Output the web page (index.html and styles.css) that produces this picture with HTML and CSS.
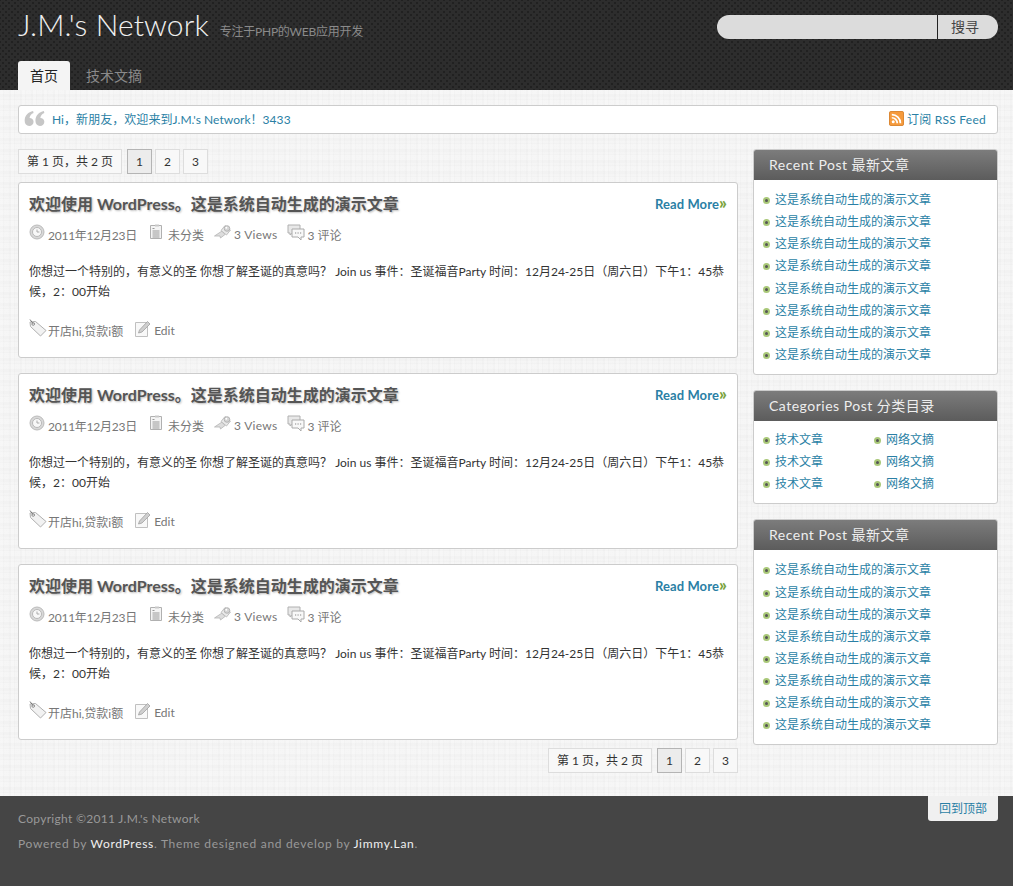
FILE: index.html
```html
<!DOCTYPE html>
<html lang="zh-CN">
<head>
    <meta charset="UTF-8">
    <title>J.M.'s Network</title>
    <link rel="stylesheet" href="styles.css">
</head>
<body>
    <svg class="defs" width="0" height="0">
        <symbol id="i-clock" viewBox="0 0 16 16">
            <circle cx="8" cy="8" r="7" fill="#d8d8d8" stroke="#bbb"/>
            <circle cx="8" cy="8" r="4.500" fill="#f8f8f8" stroke="#b8b8b8"/>
            <path d="M8 5.500V8h2.400" fill="none" stroke="#aaa"/>
        </symbol>
        <symbol id="i-doc" viewBox="0 0 14 16">
            <path d="M1.500 1.500h11v13h-11z" fill="#f4f4f4" stroke="#b0b0b0"/>
            <path d="M3.500 4.500h2M3.500 7h7M3.500 9h7M3.500 11h7M3.500 13h7" stroke="#999"/>
            <path d="M6 .5h4v2H6z" fill="#c8c8c8"/>
        </symbol>
        <symbol id="i-pin" viewBox="0 0 18 16">
            <path d="M.5 12 8 7l3 3.500-4.500 3.500L6 12z" fill="#ddd" stroke="#b4b4b4" stroke-width=".8"/>
            <path d="M7 6.500 11 1.500l5.500 4.500-4 5z" fill="#e8e8e8" stroke="#b4b4b4" stroke-width=".8"/>
            <circle cx="13" cy="4.500" r="2.800" fill="#d4d4d4" stroke="#aaa" stroke-width=".8"/>
            <circle cx="12.300" cy="3.800" r="1" fill="#fff"/>
        </symbol>
        <symbol id="i-chat" viewBox="0 0 18 17">
            <path d="M1 1h12v8H5.500L3 11V9H1z" fill="#e8e8e8" stroke="#b0b0b0"/>
            <path d="M5 5h12v8h-3v3l-3-3H5z" fill="#f8f8f8" stroke="#aaa"/>
            <path d="M8 9h1.200M10.500 9h1.200M13 9h1.200" stroke="#888"/>
        </symbol>
        <symbol id="i-tag" viewBox="0 0 18 18">
            <path d="M1 3 6.500 2.500 17 11.500 11.500 17 1.500 7.500z" fill="#f2f2f2" stroke="#b0b0b0"/>
            <circle cx="4.200" cy="5" r="1.300" fill="#fff" stroke="#888"/>
            <path d="M1 .5l3 4" stroke="#777"/>
        </symbol>
        <symbol id="i-edit" viewBox="0 0 16 17">
            <path d="M.5 2.500h12v14H.5z" fill="#f8f8f8" stroke="#c0c0c0"/>
            <path d="M3.500 13 4.500 10 12.500 1.500 15 4 7 12z" fill="#cfcfcf" stroke="#a0a0a0" stroke-width=".8"/>
        </symbol>
    </svg>

    <div class="header">
        <div class="top-row">
            <div class="brand">
                <a class="site-title" href="#">J.M.'s Network</a>
                <span class="site-desc">专注于PHP的WEB应用开发</span>
            </div>
            <form class="search">
                <input class="search-input" type="text" aria-label="搜寻">
                <button class="search-btn" type="button">搜寻</button>
            </form>
        </div>
        <ul class="nav">
            <li class="current"><a href="#">首页</a></li>
            <li><a href="#">技术文摘</a></li>
        </ul>
    </div>

    <div class="wrap">
        <div class="notice">
            <svg class="quote" viewBox="0 0 21 16">
                <path d="M9 0C4 1 0 4.500 0 10.500 0 14 2 16 4.800 16 7.500 16 9.500 14 9.500 11.500 9.500 9 7.500 7.500 5.200 7.500 5.500 5 7 3 9.500 2zM20.500 0C15.500 1 11.500 4.500 11.500 10.500 11.500 14 13.500 16 16.300 16 19 16 21 14 21 11.500 21 9 19 7.500 16.700 7.500 17 5 18.500 3 21 2z" fill="#c6c6c6"/>
            </svg>
            <span class="notice-text">Hi，新朋友，欢迎来到J.M.'s Network！3433</span>
            <a class="rss" href="#">
                <svg class="rss-icon" viewBox="0 0 16 16">
                    <rect x=".5" y=".5" width="15" height="15" rx="1.500" fill="#f59a3c" stroke="#d9822b"/>
                    <circle cx="4.500" cy="11.500" r="1.600" fill="#fff"/>
                    <path d="M3 7.200a5.800 5.800 0 0 1 5.800 5.800M3 3.800a9.200 9.200 0 0 1 9.200 9.200" fill="none" stroke="#fff" stroke-width="1.800"/>
                </svg>
                订阅 RSS Feed
            </a>
        </div>

        <div class="columns">
            <div class="main">
                <div class="pager">
                    <span class="pages">第 1 页，共 2 页</span>
                    <span class="page active">1</span>
                    <a class="page" href="#">2</a>
                    <a class="page" href="#">3</a>
                </div>

                <div class="post">
                    <div class="post-head">
                        <h2><a href="#">欢迎使用 WordPress。这是系统自动生成的演示文章</a></h2>
                        <a class="more" href="#">Read More<b>»</b></a>
                    </div>
                    <div class="meta">
                        <svg class="ico ico-clock"><use href="#i-clock"/></svg><span class="meta-item date">2011年12月23日</span>
                        <svg class="ico ico-doc"><use href="#i-doc"/></svg><span class="meta-item">未分类</span>
                        <svg class="ico ico-pin"><use href="#i-pin"/></svg><span class="meta-item views">3 Views</span>
                        <svg class="ico ico-chat"><use href="#i-chat"/></svg><span class="meta-item">3 评论</span>
                    </div>
                    <p class="excerpt">你想过一个特别的，有意义的圣 你想了解圣诞的真意吗？ Join us 事件：圣诞福音Party 时间：12月24-25日（周六日）下午1：45恭候，2：00开始</p>
                    <div class="tags">
                        <svg class="ico ico-tag"><use href="#i-tag"/></svg><span class="meta-item tag-list">开店hi,贷款i额</span>
                        <svg class="ico ico-edit"><use href="#i-edit"/></svg><span class="meta-item">Edit</span>
                    </div>
                </div>

                <div class="post">
                    <div class="post-head">
                        <h2><a href="#">欢迎使用 WordPress。这是系统自动生成的演示文章</a></h2>
                        <a class="more" href="#">Read More<b>»</b></a>
                    </div>
                    <div class="meta">
                        <svg class="ico ico-clock"><use href="#i-clock"/></svg><span class="meta-item date">2011年12月23日</span>
                        <svg class="ico ico-doc"><use href="#i-doc"/></svg><span class="meta-item">未分类</span>
                        <svg class="ico ico-pin"><use href="#i-pin"/></svg><span class="meta-item views">3 Views</span>
                        <svg class="ico ico-chat"><use href="#i-chat"/></svg><span class="meta-item">3 评论</span>
                    </div>
                    <p class="excerpt">你想过一个特别的，有意义的圣 你想了解圣诞的真意吗？ Join us 事件：圣诞福音Party 时间：12月24-25日（周六日）下午1：45恭候，2：00开始</p>
                    <div class="tags">
                        <svg class="ico ico-tag"><use href="#i-tag"/></svg><span class="meta-item tag-list">开店hi,贷款i额</span>
                        <svg class="ico ico-edit"><use href="#i-edit"/></svg><span class="meta-item">Edit</span>
                    </div>
                </div>

                <div class="post">
                    <div class="post-head">
                        <h2><a href="#">欢迎使用 WordPress。这是系统自动生成的演示文章</a></h2>
                        <a class="more" href="#">Read More<b>»</b></a>
                    </div>
                    <div class="meta">
                        <svg class="ico ico-clock"><use href="#i-clock"/></svg><span class="meta-item date">2011年12月23日</span>
                        <svg class="ico ico-doc"><use href="#i-doc"/></svg><span class="meta-item">未分类</span>
                        <svg class="ico ico-pin"><use href="#i-pin"/></svg><span class="meta-item views">3 Views</span>
                        <svg class="ico ico-chat"><use href="#i-chat"/></svg><span class="meta-item">3 评论</span>
                    </div>
                    <p class="excerpt">你想过一个特别的，有意义的圣 你想了解圣诞的真意吗？ Join us 事件：圣诞福音Party 时间：12月24-25日（周六日）下午1：45恭候，2：00开始</p>
                    <div class="tags">
                        <svg class="ico ico-tag"><use href="#i-tag"/></svg><span class="meta-item tag-list">开店hi,贷款i额</span>
                        <svg class="ico ico-edit"><use href="#i-edit"/></svg><span class="meta-item">Edit</span>
                    </div>
                </div>

                <div class="pager bottom">
                    <span class="pages">第 1 页，共 2 页</span>
                    <span class="page active">1</span>
                    <a class="page" href="#">2</a>
                    <a class="page" href="#">3</a>
                </div>
            </div>

            <div class="side">
                <div class="widget">
                    <h3>Recent Post 最新文章</h3>
                    <ul class="links">
                        <li><a href="#">这是系统自动生成的演示文章</a></li>
                        <li><a href="#">这是系统自动生成的演示文章</a></li>
                        <li><a href="#">这是系统自动生成的演示文章</a></li>
                        <li><a href="#">这是系统自动生成的演示文章</a></li>
                        <li><a href="#">这是系统自动生成的演示文章</a></li>
                        <li><a href="#">这是系统自动生成的演示文章</a></li>
                        <li><a href="#">这是系统自动生成的演示文章</a></li>
                        <li><a href="#">这是系统自动生成的演示文章</a></li>
                    </ul>
                </div>
                <div class="widget">
                    <h3>Categories Post 分类目录</h3>
                    <ul class="links two-col">
                        <li><a href="#">技术文章</a></li>
                        <li><a href="#">网络文摘</a></li>
                        <li><a href="#">技术文章</a></li>
                        <li><a href="#">网络文摘</a></li>
                        <li><a href="#">技术文章</a></li>
                        <li><a href="#">网络文摘</a></li>
                    </ul>
                </div>
                <div class="widget">
                    <h3>Recent Post 最新文章</h3>
                    <ul class="links">
                        <li><a href="#">这是系统自动生成的演示文章</a></li>
                        <li><a href="#">这是系统自动生成的演示文章</a></li>
                        <li><a href="#">这是系统自动生成的演示文章</a></li>
                        <li><a href="#">这是系统自动生成的演示文章</a></li>
                        <li><a href="#">这是系统自动生成的演示文章</a></li>
                        <li><a href="#">这是系统自动生成的演示文章</a></li>
                        <li><a href="#">这是系统自动生成的演示文章</a></li>
                        <li><a href="#">这是系统自动生成的演示文章</a></li>
                    </ul>
                </div>
            </div>
        </div>
    </div>

    <div class="footer">
        <a class="to-top" href="#">回到顶部</a>
        <p>Copyright ©2011 J.M.'s Network</p>
        <p>Powered by <a href="#">WordPress</a>. Theme designed and develop by <a href="#">Jimmy.Lan</a>.</p>
    </div>
</body>
</html>
```

FILE: styles.css
```css
body{
    margin: 0;
    color: #333;
    font-family: Lato, "Noto Sans CJK SC", sans-serif;
    font-size: 12px;
    background-color: #f3f3f3;
    background-image:
        repeating-linear-gradient(90deg, rgba(255,255,255,0.18) 0 3px, rgba(0,0,0,0.006) 3px 4px, rgba(255,255,255,0.08) 4px 9px, rgba(0,0,0,0.008) 9px 11px),
        repeating-linear-gradient(0deg, rgba(255,255,255,0.15) 0 5px, rgba(0,0,0,0.006) 5px 6px, rgba(255,255,255,0.06) 6px 8px, rgba(0,0,0,0.008) 8px 11px);
}

a{
    color: #2a7fa5;
    text-decoration: none;
}

ul{
    list-style: none;
    margin: 0;
    padding: 0;
}

.defs{
    position: absolute;
}

/* header */
.header{
    height: 90px;
    box-sizing: border-box;
    padding: 0 15px 0 18px;
    display: flex;
    flex-direction: column;
    background-color: #2d2d2d;
    background-image:
        radial-gradient(#212121 1px, transparent 1.3px),
        radial-gradient(#212121 1px, transparent 1.3px);
    background-size: 6px 6px;
    background-position: 0 0, 3px 3px;
}

.top-row{
    height: 61px;
    display: flex;
    justify-content: space-between;
}

.brand{
    display: flex;
    align-items: baseline;
    padding-top: 5px;
}

.site-title{
    font-size: 30px;
    line-height: 38px;
    color: #f0f0f0;
    letter-spacing: .1px;
    font-weight: 300;
}

.site-desc{
    margin-left: 11px;
    color: #8a8a8a;
    font-size: 12px;
    letter-spacing: -.25px;
}

.search{
    display: flex;
    height: 24px;
    margin-top: 15px;
}

.search-input{
    width: 221px;
    height: 24px;
    box-sizing: border-box;
    border: 0;
    border-right: 1px solid #222;
    border-radius: 12px 0 0 12px;
    background: #dcdcdc;
    padding: 0 10px;
}

.search-btn{
    width: 60px;
    height: 24px;
    border: 0;
    border-radius: 0 12px 12px 0;
    background: #dcdcdc;
    color: #444;
    font-family: inherit;
    font-size: 14px;
    line-height: 22px;
    padding: 0 6px 0 0;
}

.nav{
    display: flex;
    height: 29px;
}

.nav li{
    width: 52px;
    margin-right: 16px;
    text-align: center;
    line-height: 30px;
    font-size: 14px;
}

.nav li a{
    color: #8a8a8a;
    white-space: nowrap;
}

.nav li.current{
    background: #f4f4f4;
    border-radius: 3px 3px 0 0;
}

.nav li.current a{
    color: #222;
}

/* notice bar */
.wrap{
    padding: 15px 15px 23px 18px;
}

.notice{
    height: 29px;
    box-sizing: border-box;
    display: flex;
    align-items: center;
    padding: 0 11px 2px 5px;
    background: #fff;
    border: 1px solid #ccc;
    border-radius: 3px;
    color: #2a7fa5;
}

.quote{
    width: 21px;
    height: 15px;
    margin-right: 7px;
    flex: none;
}

.notice-text{
    flex: 1;
    letter-spacing: .05px;
}

.rss{
    display: flex;
    align-items: center;
    gap: 3px;
    letter-spacing: .25px;
}

.rss-icon{
    width: 15px;
    height: 15px;
}

/* columns */
.columns{
    display: grid;
    grid-template-columns: 720px 245px;
    gap: 15px;
    margin-top: 15px;
}

.pager{
    display: flex;
    gap: 3px;
    height: 25px;
    line-height: 23px;
    margin-bottom: 8px;
}

.pager.bottom{
    justify-content: flex-end;
    margin: 8px 0 0;
}

.pages, .page{
    box-sizing: border-box;
    height: 25px;
    background: #f8f8f8;
    border: 1px solid #ddd;
    color: #333;
    text-align: center;
}

.pages{
    width: 104px;
    margin-right: 2px;
}

.page{
    width: 25px;
}

.page.active{
    background: #ececec;
    border-color: #b4b4b4;
}

/* posts */
.post{
    height: 176px;
    box-sizing: border-box;
    padding: 8px 10px 0;
    margin-bottom: 15px;
    background: #fff;
    border: 1px solid #ccc;
    border-radius: 3px;
}

.post:nth-last-child(2){
    margin-bottom: 0;
}

.post-head{
    display: flex;
    justify-content: space-between;
    align-items: center;
    height: 24px;
}

.post-head h2{
    margin: 0;
    font-size: 16px;
    font-weight: bold;
    text-shadow: 1px 1px 2px #bbb;
}

.post-head h2 a{
    color: #555;
}

.more{
    font-size: 13px;
    font-weight: bold;
    color: #2a7fa5;
    white-space: nowrap;
    letter-spacing: .1px;
    padding-top: 2px;
}

.more b{
    color: #7aa33c;
    font-size: 17px;
    line-height: 12px;
}

.meta, .tags{
    display: flex;
    align-items: center;
    color: #888;
}

.meta{
    margin-top: 10px;
    height: 18px;
}

.ico{
    flex: none;
    margin-bottom: 4px;
}

.ico-clock{
    width: 16px;
    height: 16px;
    margin-right: 3px;
}

.ico-doc{
    width: 14px;
    height: 16px;
    margin-right: 5px;
}

.ico-pin{
    width: 18px;
    height: 16px;
    margin-right: 2px;
}

.ico-chat{
    width: 18px;
    height: 17px;
    margin-right: 3px;
}

.ico-tag{
    width: 18px;
    height: 18px;
    margin-right: 1px;
}

.ico-edit{
    width: 16px;
    height: 17px;
    margin-right: 3px;
}

.meta-item{
    margin-right: 10px;
    color: #777;
}

.date{
    letter-spacing: -.25px;
    margin-right: 12px;
}

.views{
    letter-spacing: .3px;
    margin-right: 9px;
}

.tag-list{
    margin-right: 12px;
}

.excerpt{
    margin: 19px 0 0;
    line-height: 20px;
    color: #333;
}

.tags{
    margin-top: 18px;
    height: 20px;
}

/* sidebar */
.side{
    display: flex;
    flex-direction: column;
    gap: 15px;
}

.widget{
    background: #fff;
    border: 1px solid #ccc;
    border-radius: 3px;
}

.widget h3{
    margin: 0;
    height: 30px;
    padding-left: 15px;
    line-height: 29px;
    font-size: 14px;
    font-weight: normal;
    color: #eee;
    background: linear-gradient(#7c7c7c, #5c5c5c);
    border-radius: 2px 2px 0 0;
    letter-spacing: .5px;
}

.links{
    padding: 9px 9px 8px;
}

.links li{
    height: 22.14px;
    line-height: 22px;
    padding-left: 12px;
    position: relative;
}

.links li::before{
    content: "";
    position: absolute;
    left: 0;
    top: 8px;
    width: 3px;
    height: 3px;
    border-radius: 50%;
    background: #555;
    border: 2px solid #a9c878;
}

.two-col{
    display: grid;
    grid-template-columns: 111px 1fr;
    padding-top: 8px;
}

/* footer */
.footer{
    position: relative;
    height: 90px;
    box-sizing: border-box;
    padding: 10px 18px 0;
    background: #454545;
    color: #999;
}

.footer p{
    margin: 0;
    line-height: 25px;
    letter-spacing: .3px;
}

.footer p + p{
    letter-spacing: .69px;
}

.footer p a{
    color: #f0f0f0;
}

.to-top{
    position: absolute;
    top: 0;
    right: 15px;
    width: 70px;
    height: 25px;
    line-height: 25px;
    text-align: center;
    background: #f0f0f0;
    border-radius: 0 0 3px 3px;
}
```
